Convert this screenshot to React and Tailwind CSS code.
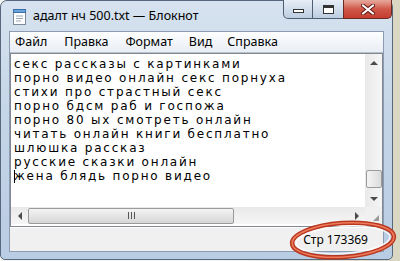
import React from 'react';

const lines = [
  'секс рассказы с картинками',
  'порно видео онлайн секс порнуха',
  'стихи про страстный секс',
  'порно бдсм раб и госпожа',
  'порно 80 ых смотреть онлайн',
  'читать онлайн книги бесплатно',
  'шлюшка рассказ',
  'русские сказки онлайн',
  'жена блядь порно видео',
];

const NotepadIcon = () => (
  <svg width="16" height="17" viewBox="0 0 16 17">
    <rect x="1.5" y="2.5" width="12" height="14" fill="#fff" stroke="#7c8a99" />
    <rect x="1.5" y="1.5" width="12" height="3" fill="#6aa4dc" stroke="#3d6fa8" />
    <path d="M4 8h7M4 10.5h7M4 13h5" stroke="#9aa6b4" strokeWidth="1" />
  </svg>
);

const Arrow = ({ dir }) => {
  const d = {
    up: 'M0 4L4 0L8 4Z',
    down: 'M0 0L8 0L4 4Z',
    left: 'M4 0L4 8L0 4Z',
    right: 'M0 0L4 4L0 8Z',
  }[dir];
  const vertical = dir === 'up' || dir === 'down';
  return (
    <svg width={vertical ? 8 : 4} height={vertical ? 4 : 8} viewBox={vertical ? '0 0 8 4' : '0 0 4 8'}>
      <path d={d} fill="#4a4a4a" />
    </svg>
  );
};

export default function App() {
  return (
    <div className="relative w-[400px] h-[261px] overflow-hidden bg-gradient-to-r from-[#f4f4f2] via-[#f4f4f2] to-[#d9d6c2]">
      <div
        className="w-[393px] h-[260px] rounded-t-[7px] rounded-b-[5px] border border-[#58687c] bg-gradient-to-b from-[#d6e2ef] via-[#c3d4e7] to-[#b8cce3] flex flex-col px-[8px] pb-[7px]"
        style={{ fontFamily: '"Noto Sans", "Liberation Sans", sans-serif' }}
      >
        <div className="h-[30px] flex items-start">
          <div className="flex items-center gap-[5px] pt-[7px] pl-[3px]">
            <NotepadIcon />
            <span className="text-[12.5px] text-black leading-none">адалт нч 500.txt — Блокнот</span>
          </div>
          <div className="ml-auto flex -mr-[8px] h-[19px] -mt-px">
            <div className="w-[30px] border border-[#4f5e70] border-t-0 rounded-bl-[5px] bg-gradient-to-b from-[#e7eef6] to-[#bccde0] flex items-center justify-center">
              <div className="w-[11px] h-[4px] border border-[#333] bg-white mt-[4px]" />
            </div>
            <div className="w-[30px] border-b border-[#4f5e70] bg-gradient-to-b from-[#e7eef6] to-[#bccde0] flex items-center justify-center">
              <div className="w-[11px] h-[9px] border border-[#333] border-t-[3px] bg-white" />
            </div>
            <div className="w-[49px] border border-[#6b2a22] border-t-0 rounded-br-[5px] bg-gradient-to-b from-[#e6a99d] via-[#d0584a] to-[#c43c2e] flex items-center justify-center">
              <svg width="14" height="11" viewBox="0 0 14 11">
                <path d="M2 1.5L12 9.5M12 1.5L2 9.5" stroke="#5a1a14" strokeWidth="4" strokeLinecap="round" />
                <path d="M2 1.5L12 9.5M12 1.5L2 9.5" stroke="#fff" strokeWidth="2.2" strokeLinecap="round" />
              </svg>
            </div>
          </div>
        </div>

        <div className="flex-1 flex flex-col border border-[#8c9cb0] bg-[#f0f0f0]">
          <div className="h-[21px] flex items-center bg-gradient-to-b from-[#fdfeff] to-[#e9eef5] border-b border-[#b6c2d0] text-[12.5px] text-black">
            <span className="ml-[5px]">Файл</span>
            <span className="ml-[17px]">Правка</span>
            <span className="ml-[17px]">Формат</span>
            <span className="ml-[16px]">Вид</span>
            <span className="ml-[15px]">Справка</span>
          </div>

          <div className="flex-1 flex bg-white border border-[#828790] border-b-0">
            <div
              className="flex-1 pl-[3px] pt-[3px] text-[12px] leading-[14px] text-black tracking-[1.8px] whitespace-nowrap overflow-hidden"
              style={{ fontFamily: '"DejaVu Sans", sans-serif' }}
            >
              {lines.map((l, i) => (
                <div key={i} className="relative">
                  {i === lines.length - 1 && <span className="absolute left-0 top-[1px] w-px h-[13px] bg-black" />}
                  {l}
                </div>
              ))}
            </div>
            <div className="w-[17px] bg-gradient-to-r from-[#e9e9e9] to-[#f6f6f6] flex flex-col items-center">
              <div className="h-[17px] flex items-center justify-center"><Arrow dir="up" /></div>
              <div className="flex-1" />
              <div className="w-[16px] h-[18px] rounded-[2px] border border-[#9a9a9a] bg-gradient-to-r from-[#f4f4f4] to-[#dcdcdc] mb-[2px]" />
              <div className="h-[17px] flex items-center justify-center"><Arrow dir="down" /></div>
            </div>
          </div>

          <div className="h-[17px] flex bg-white border-x border-[#828790]">
            <div className="flex-1 flex items-center bg-gradient-to-b from-[#e9e9e9] to-[#f6f6f6]">
              <div className="w-[17px] flex justify-center"><Arrow dir="left" /></div>
              <div className="w-[206px] h-[16px] rounded-[2px] border border-[#9a9a9a] bg-gradient-to-b from-[#f4f4f4] to-[#d6d6d6] flex items-center justify-center">
                <svg width="7" height="7" viewBox="0 0 7 7"><path d="M0.5 0v7M3.5 0v7M6.5 0v7" stroke="#555" /></svg>
              </div>
              <div className="flex-1" />
              <div className="w-[17px] flex justify-center"><Arrow dir="right" /></div>
            </div>
            <div className="w-[17px] bg-[#f0f0f0] flex items-end justify-end p-[2px]">
              <svg width="8" height="8" viewBox="0 0 8 8"><path d="M7 1L7 7L1 7Z" fill="#9a9a9a" /></svg>
            </div>
          </div>

          <div className="h-[3px] bg-white border-x border-b border-[#828790]" />
          <div className="h-[24px] flex items-center justify-end pr-[15px] border-t border-white text-[12px] text-black">
            <span>Стр 173369</span>
          </div>
        </div>
      </div>

      <svg className="absolute left-[286px] top-[218px]" width="114" height="43" viewBox="0 0 114 43">
        <g transform="rotate(-4 57 22)">
          <ellipse cx="57" cy="22" rx="51" ry="17" fill="none" stroke="#b8371f" strokeWidth="4.5" />
          <ellipse cx="57" cy="22" rx="51" ry="17" fill="none" stroke="#ef7a5c" strokeWidth="1.5" />
          <ellipse cx="57" cy="22" rx="47" ry="13.5" fill="none" stroke="#ffffff" strokeOpacity="0.8" strokeWidth="1.5" />
        </g>
      </svg>
    </div>
  );
}
